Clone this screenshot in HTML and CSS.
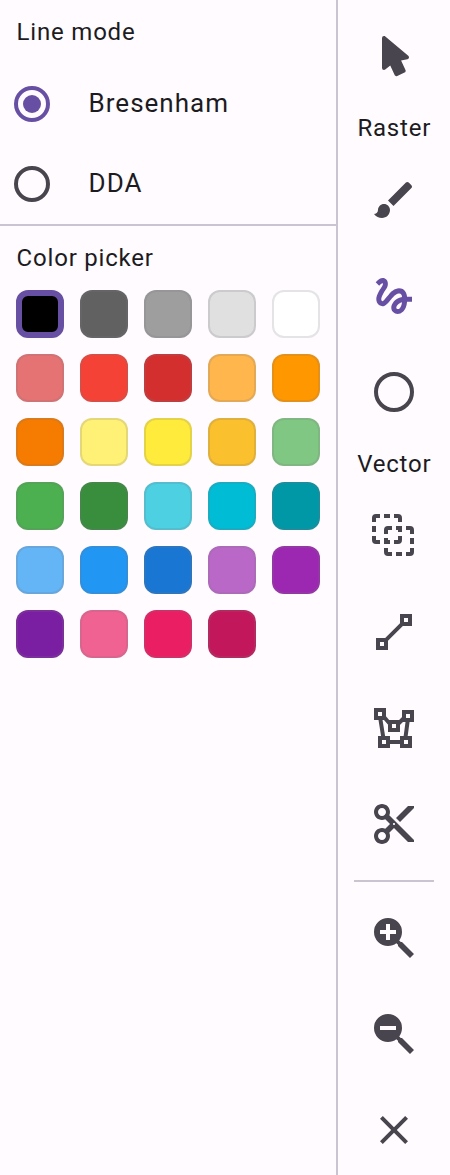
FILE: index.html
```html
<!DOCTYPE html>
<html lang="en">
<head>
<meta charset="utf-8">
<title>Paint tools</title>
<link rel="stylesheet" href="styles.css">
</head>
<body>
<div class="app">
  <main class="panel">
    <section class="modes">
      <h2 class="label">Line mode</h2>
      <div class="radio-row selected"><span class="radio"></span><span class="radio-text">Bresenham</span></div>
      <div class="radio-row"><span class="radio"></span><span class="radio-text">DDA</span></div>
    </section>
    <section class="picker">
      <h2 class="label">Color picker</h2>
      <div class="swatches">
        <i class="swatch active black"></i><i class="swatch gray-700"></i><i class="swatch gray-500"></i><i class="swatch gray-300"></i><i class="swatch white"></i>
        <i class="swatch red-300"></i><i class="swatch red-500"></i><i class="swatch red-700"></i><i class="swatch orange-300"></i><i class="swatch orange-500"></i>
        <i class="swatch orange-700"></i><i class="swatch yellow-300"></i><i class="swatch yellow-500"></i><i class="swatch yellow-700"></i><i class="swatch green-300"></i>
        <i class="swatch green-500"></i><i class="swatch green-700"></i><i class="swatch cyan-300"></i><i class="swatch cyan-500"></i><i class="swatch cyan-700"></i>
        <i class="swatch blue-300"></i><i class="swatch blue-500"></i><i class="swatch blue-700"></i><i class="swatch purple-300"></i><i class="swatch purple-500"></i>
        <i class="swatch purple-700"></i><i class="swatch pink-300"></i><i class="swatch pink-500"></i><i class="swatch pink-700"></i>
      </div>
    </section>
  </main>
  <aside class="toolbar">
    <button class="tool" aria-label="Select"><svg class="icon" viewBox="0 0 24 24"><path d="M13.64,21.97C13.14,22.21 12.54,22 12.31,21.5L10.13,16.76L7.62,18.78C7.45,18.92 7.24,19 7,19A1,1 0 0,1 6,18V3A1,1 0 0,1 7,2C7.24,2 7.47,2.09 7.64,2.23L7.65,2.22L19.14,11.86C19.57,12.22 19.62,12.85 19.27,13.27C19.12,13.45 18.91,13.57 18.7,13.61L15.54,14.23L17.74,18.96C18,19.46 17.76,20.05 17.26,20.28L13.64,21.97Z"/></svg></button>
    <h2 class="label">Raster</h2>
    <button class="tool" aria-label="Brush"><svg class="icon" viewBox="0 0 24 24"><path d="M7 14c-1.66 0-3 1.34-3 3 0 1.31-1.16 2-2 2 .92 1.22 2.49 2 4 2 2.21 0 4-1.79 4-4 0-1.66-1.34-3-3-3zm13.71-9.37l-1.34-1.34c-.39-.39-1.02-.39-1.41 0L9 12.25 11.75 15l8.96-8.96c.39-.39.39-1.02 0-1.41z"/></svg></button>
    <button class="tool current" aria-label="Freehand"><svg class="icon" viewBox="0 0 24 24"><path d="M4.59 6.89c.7-.71 1.4-1.35 1.71-1.22.5.2 0 1.03-.3 1.52-.25.42-2.86 3.89-2.86 6.31 0 1.28.48 2.34 1.34 2.98.75.56 1.74.73 2.64.46 1.07-.31 1.95-1.4 3.06-2.77 1.21-1.49 2.83-3.44 4.08-3.44 1.63 0 1.65 1.01 1.76 1.79-3.78.64-5.38 3.67-5.38 5.37 0 1.7 1.44 3.09 3.21 3.09 1.63 0 4.29-1.33 4.69-6.1H21v-2.5h-2.47c-.15-1.65-1.09-4.2-4.03-4.2-2.25 0-4.18 1.91-4.94 2.84-.58.73-2.06 2.48-2.29 2.72-.25.3-.68.84-1.11.84-.45 0-.72-.83-.36-1.92.35-1.09 1.4-2.86 1.85-3.52.78-1.14 1.3-1.92 1.3-3.28C8.95 3.69 7.31 3 6.44 3 5.12 3 3.97 4 3.72 4.25c-.36.36-.66.66-.88.93l1.75 1.71zm9.29 11.66c-.31 0-.74-.26-.74-.72 0-.6.73-2.2 2.87-2.76-.3 2.69-1.43 3.48-2.13 3.48z"/></svg></button>
    <button class="tool" aria-label="Circle"><svg class="icon" viewBox="0 0 24 24"><circle class="line" cx="12" cy="12" r="9"/></svg></button>
    <h2 class="label">Vector</h2>
    <button class="tool" aria-label="Select shapes"><svg class="icon" viewBox="0 0 24 24"><path class="line" d="M2 5V3a1 1 0 0 1 1-1H5M7 2h3M12 2h2a1 1 0 0 1 1 1V5M15 7v3M15 12v2a1 1 0 0 1-1 1h-2M10 15H7M5 15H3a1 1 0 0 1-1-1v-2M2 10V7M8 11V9a1 1 0 0 1 1-1h2M13 8h3M18 8h2a1 1 0 0 1 1 1v2M21 13v3M21 18v2a1 1 0 0 1-1 1h-2M16 21h-3M11 21H9a1 1 0 0 1-1-1v-2M8 16v-3"/></svg></button>
    <button class="tool" aria-label="Line"><svg class="icon" viewBox="0 0 24 24"><path d="M15,3V7.59L7.59,15H3V21H9V16.42L16.42,9H21V3M17,5H19V7H17M5,17H7V19H5" fill-rule="evenodd"/></svg></button>
    <button class="tool" aria-label="Polygon"><svg class="icon" viewBox="0 0 24 24"><path class="line" d="M3 3h4v4H3zM17 4h4v4h-4zM10 9h4v4h-4zM5 17h4v4H5zM16 17h4v4h-4zM5.1 7L6.7 17M18.9 8L17.7 17M9 19h7M7 6.5l3 3.5M17 7l-3 3"/></svg></button>
    <button class="tool" aria-label="Clip"><svg class="icon" viewBox="0 0 24 24"><path d="M9.64 7.64c.23-.5.36-1.05.36-1.64 0-2.21-1.79-4-4-4S2 3.79 2 6s1.79 4 4 4c.59 0 1.14-.13 1.64-.36L10 12l-2.36 2.36C7.14 14.13 6.59 14 6 14c-2.21 0-4 1.79-4 4s1.79 4 4 4 4-1.79 4-4c0-.59-.13-1.14-.36-1.64L12 14l7 7h3v-1L9.64 7.64zM6 8c-1.1 0-2-.89-2-2s.9-2 2-2 2 .89 2 2-.9 2-2 2zm0 12c-1.1 0-2-.89-2-2s.9-2 2-2 2 .89 2 2-.9 2-2 2zm6-7.5c-.28 0-.5-.22-.5-.5s.22-.5.5-.5.5.22.5.5-.22.5-.5.5zM19 3l-6 6 2 2 7-7V3z"/></svg></button>
    <hr class="divider">
    <button class="tool" aria-label="Zoom in"><svg class="icon" viewBox="0 0 24 24"><path d="M9,2A7,7 0 0,1 16,9C16,10.57 15.5,12 14.61,13.19L15.41,14H16L22,20L20,22L14,16V15.41L13.19,14.61C12,15.5 10.57,16 9,16A7,7 0 0,1 2,9A7,7 0 0,1 9,2M8,5V8H5V10H8V13H10V10H13V8H10V5H8Z"/></svg></button>
    <button class="tool" aria-label="Zoom out"><svg class="icon" viewBox="0 0 24 24"><path d="M9,2A7,7 0 0,1 16,9C16,10.57 15.5,12 14.61,13.19L15.41,14H16L22,20L20,22L14,16V15.41L13.19,14.61C12,15.5 10.57,16 9,16A7,7 0 0,1 2,9A7,7 0 0,1 9,2M5,8V10H13V8H5Z"/></svg></button>
    <button class="tool" aria-label="Close"><svg class="icon" viewBox="0 0 24 24"><path d="M19 6.41L17.59 5 12 10.59 6.41 5 5 6.41 10.59 12 5 17.59 6.41 19 12 13.41 17.59 19 19 17.59 13.41 12z"/></svg></button>
  </aside>
</div>
</body>
</html>
```
FILE: styles.css
```css
* { box-sizing: border-box; }
body {
  margin: 0;
  background: #fffbff;
  color: #1c1b1f;
  font-family: Roboto, sans-serif;
}
.app { display: flex; height: 1175px; overflow: hidden; }
.panel { width: 338px; border-right: 2px solid #cac4d0; }
.label {
  margin: 0;
  padding-left: .6px;
  font-size: 24px;
  line-height: 32px;
  font-weight: 400;
  letter-spacing: .8px;
  white-space: nowrap;
}
.modes { padding-top: 16px; border-bottom: 2px solid #cac4d0; }
.modes .label { margin: 0 16px 16px; }
.radio-row { display: flex; align-items: center; gap: 38.6px; height: 80px; padding-left: 14px; }
.radio {
  display: flex;
  align-items: center;
  justify-content: center;
  width: 36px;
  height: 36px;
  border: 4px solid #49454f;
  border-radius: 50%;
}
.selected .radio { border-color: #6750a4; }
.selected .radio::after {
  content: "";
  width: 18px;
  height: 18px;
  border-radius: 50%;
  background: #6750a4;
}
.radio-text { padding-bottom: 2px; font-size: 26px; line-height: 40px; letter-spacing: 1px; }
.picker { padding: 16px; }
.swatches { display: grid; grid-template-columns: repeat(5, 48px); gap: 16px; margin-top: 16px; }
.swatch { height: 48px; border: 2px solid rgba(121, 116, 126, .2); border-radius: 12px; }
.swatch.active { border: 6px solid #6750a4; }
.black { background: #000; }
.gray-700 { background: #616161; }
.gray-500 { background: #9e9e9e; }
.gray-300 { background: #e0e0e0; }
.white { background: #fff; }
.red-300 { background: #e57373; }
.red-500 { background: #f44336; }
.red-700 { background: #d32f2f; }
.orange-300 { background: #ffb74d; }
.orange-500 { background: #ff9800; }
.orange-700 { background: #f57c00; }
.yellow-300 { background: #fff176; }
.yellow-500 { background: #ffeb3b; }
.yellow-700 { background: #fbc02d; }
.green-300 { background: #81c784; }
.green-500 { background: #4caf50; }
.green-700 { background: #388e3c; }
.cyan-300 { background: #4dd0e1; }
.cyan-500 { background: #00bcd4; }
.cyan-700 { background: #0097a7; }
.blue-300 { background: #64b5f6; }
.blue-500 { background: #2196f3; }
.blue-700 { background: #1976d2; }
.purple-300 { background: #ba68c8; }
.purple-500 { background: #9c27b0; }
.purple-700 { background: #7b1fa2; }
.pink-300 { background: #f06292; }
.pink-500 { background: #e91e63; }
.pink-700 { background: #c2185b; }
.toolbar {
  display: flex;
  flex: 1;
  flex-direction: column;
  align-items: center;
  gap: 16px;
  padding-top: 16px;
}
.tool {
  display: flex;
  flex: none;
  align-items: center;
  justify-content: center;
  width: 80px;
  height: 80px;
  padding: 0;
  border: 0;
  background: none;
  color: #49454f;
}
.current { color: #6750a4; }
.icon { width: 48px; height: 48px; fill: currentColor; }
.line { fill: none; stroke: currentColor; stroke-width: 2; }
.divider { flex: none; width: 80px; height: 2px; margin: 0; border: 0; background: #cac4d0; }
```
